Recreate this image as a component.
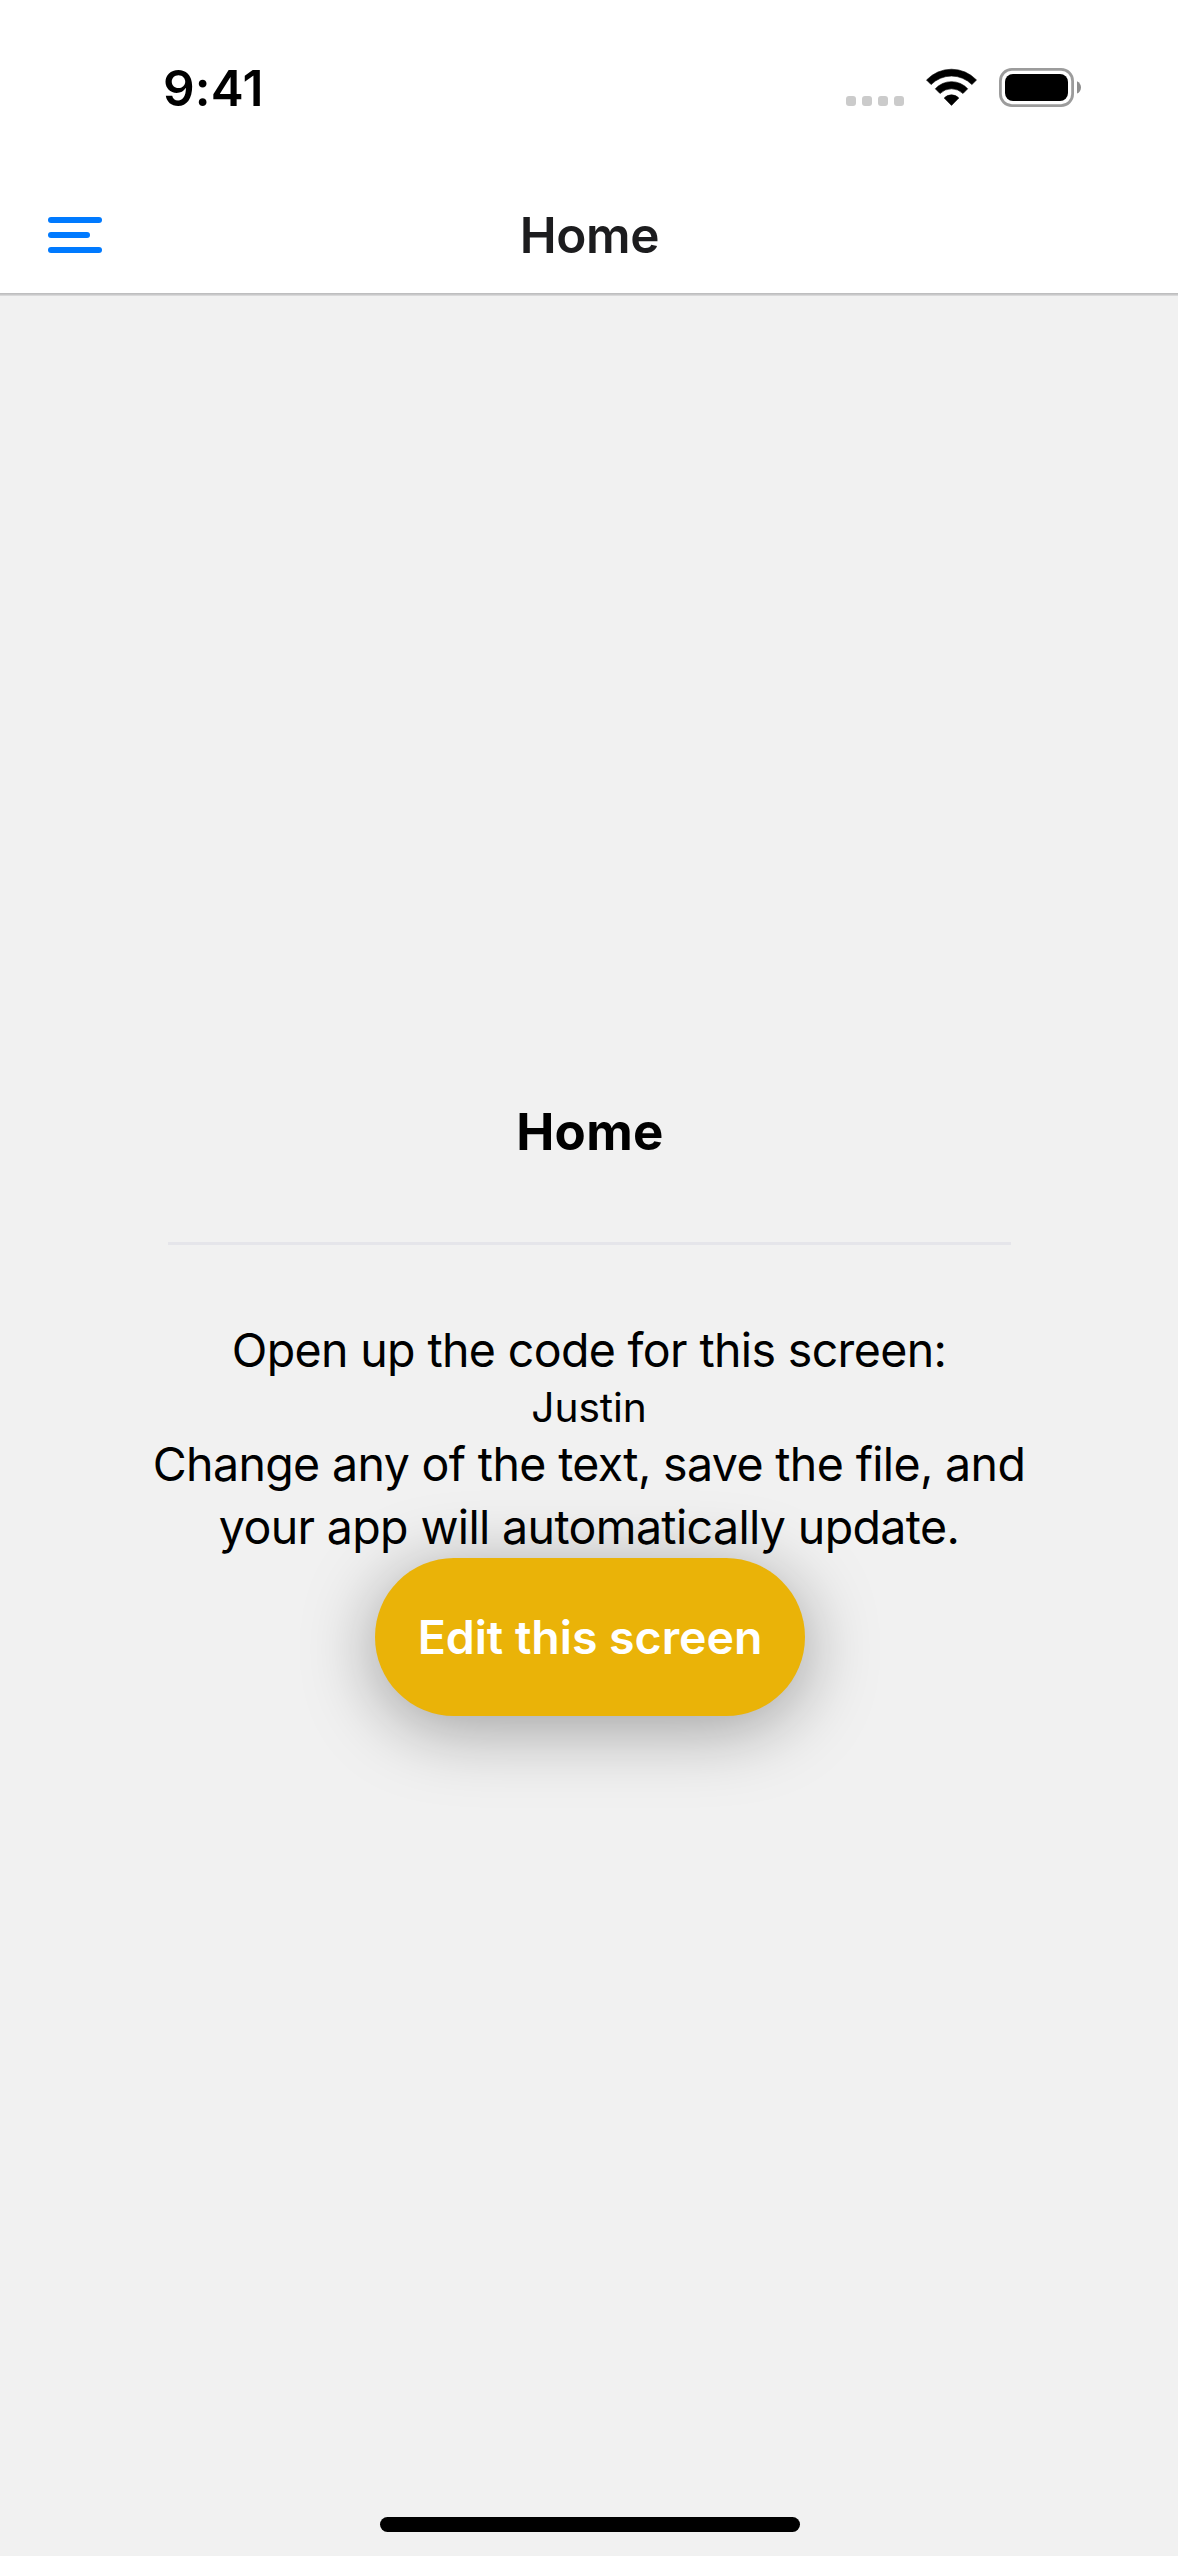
<div class="screen">
  <header>
    <div class="status">
      <span class="time">9:41</span>
      <svg class="indicators" width="235" height="39" viewBox="0 0 235 39" aria-hidden="true">
        <g fill="#cbcbcb">
          <rect x="0" y="28" width="10" height="10" rx="3" />
          <rect x="16" y="28" width="10" height="10" rx="3" />
          <rect x="32" y="28" width="10" height="10" rx="3" />
          <rect x="48" y="28" width="10" height="10" rx="3" />
        </g>
        <g stroke="#000" stroke-width="0.6" stroke-linejoin="round">
          <path d="M80.5 12A34.4 34.4 0 0 1 130.5 12L125.9 16.6A28.6 28.6 0 0 0 85.1 16.6Z" />
          <path d="M89.3 20.8A21.9 21.9 0 0 1 121.7 20.8L117 25.5A16.4 16.4 0 0 0 94 25.5Z" />
          <path d="M98.2 30A10 10 0 0 1 112.8 30L105.5 37.4Z" />
        </g>
        <rect x="154.4" y="1.4" width="72.2" height="36.2" rx="11.5" fill="none" stroke="#9c9c9c" stroke-width="2.8" />
        <rect x="159" y="6" width="63" height="27" rx="8" />
        <path d="M231 13.2C233.4 14.2 235 16.7 235 19.4S233.4 24.6 231 25.6Z" fill="#8e8e8e" />
      </svg>
    </div>
    <nav>
      <button class="menu" aria-label="Menu">
        <span></span>
        <span class="short"></span>
        <span></span>
      </button>
      <h1>Home</h1>
    </nav>
  </header>

  <main>
    <h2>Home</h2>
    <hr />
    <p>Open up the code for this screen:</p>
    <p class="name">Justin</p>
    <p class="hint">Change any of the text, save the file, and<br />your app will automatically update.</p>
    <button class="edit">Edit this screen</button>
  </main>

  <footer><div class="home-indicator"></div></footer>
</div>

<style>
  :global(body) {
    margin: 0;
    background: #f1f1f1;
  }

  .screen {
    display: flex;
    flex-direction: column;
    width: 1178px;
    height: 2556px;
    overflow: hidden;
    background: #f1f1f1;
    color: #000;
    font-family: Inter, 'Liberation Sans', sans-serif;
  }

  h1, h2, p, hr { margin: 0; }

  button {
    border: 0;
    padding: 0;
    background: none;
    font-family: inherit;
  }

  header {
    margin-bottom: 2px;
    background: #fff;
    border-bottom: 1px solid #bebebf;
    box-shadow: 0 1px #c8c8c9, 0 2px #d8d8d9;
  }

  .status {
    display: flex;
    align-items: center;
    justify-content: space-between;
    height: 176px;
    padding: 0 97px 0 163px;
    box-sizing: border-box;
  }

  .time {
    font-size: 49.5px;
    font-weight: 600;
    line-height: 60px;
    letter-spacing: 0.2px;
  }

  .indicators {
    display: block;
    margin-bottom: 1px;
  }

  nav {
    display: grid;
    grid-template-columns: 1fr auto 1fr;
    align-items: center;
    height: 117px;
    padding: 0 47px 0 48px;
  }

  .menu {
    display: flex;
    flex-direction: column;
    gap: 9px;
    width: 54px;
    padding-top: 1px;
  }

  .menu span {
    width: 54px;
    height: 6px;
    border-radius: 3px;
    background: #007aff;
  }

  .menu .short { width: 42px; }

  h1 {
    padding-top: 1px;
    color: #1c1c1e;
    font-size: 49.5px;
    font-weight: 600;
    line-height: 60px;
    letter-spacing: -0.3px;
  }

  main {
    display: flex;
    flex: 1;
    flex-direction: column;
    align-items: center;
    padding-top: 805px;
    text-align: center;
  }

  h2 {
    padding-left: 2px;
    font-size: 51px;
    font-weight: 700;
    line-height: 61px;
    letter-spacing: 0.35px;
  }

  hr {
    width: 843px;
    height: 3px;
    margin: 80px 0 74px 1px;
    border: 0;
    background: #e5e5ea;
  }

  p {
    font-size: 46.5px;
    line-height: 63px;
    letter-spacing: -0.64px;
  }

  .name {
    font-size: 40.7px;
    line-height: 51px;
    letter-spacing: -0.1px;
  }

  .hint { margin-bottom: -1px; }

  .edit {
    width: 430px;
    height: 158px;
    margin-left: 2px;
    border-radius: 79px;
    background: #eab308;
    box-shadow: 0 12px 72px rgba(0, 0, 0, 0.35);
    color: #fff;
    font-size: 46.5px;
    font-weight: 600;
    letter-spacing: -0.04px;
  }

  footer {
    display: flex;
    justify-content: center;
    padding-bottom: 24px;
  }

  .home-indicator {
    width: 420px;
    height: 15px;
    margin-left: 2px;
    border-radius: 8px;
    background: #000;
  }
</style>
